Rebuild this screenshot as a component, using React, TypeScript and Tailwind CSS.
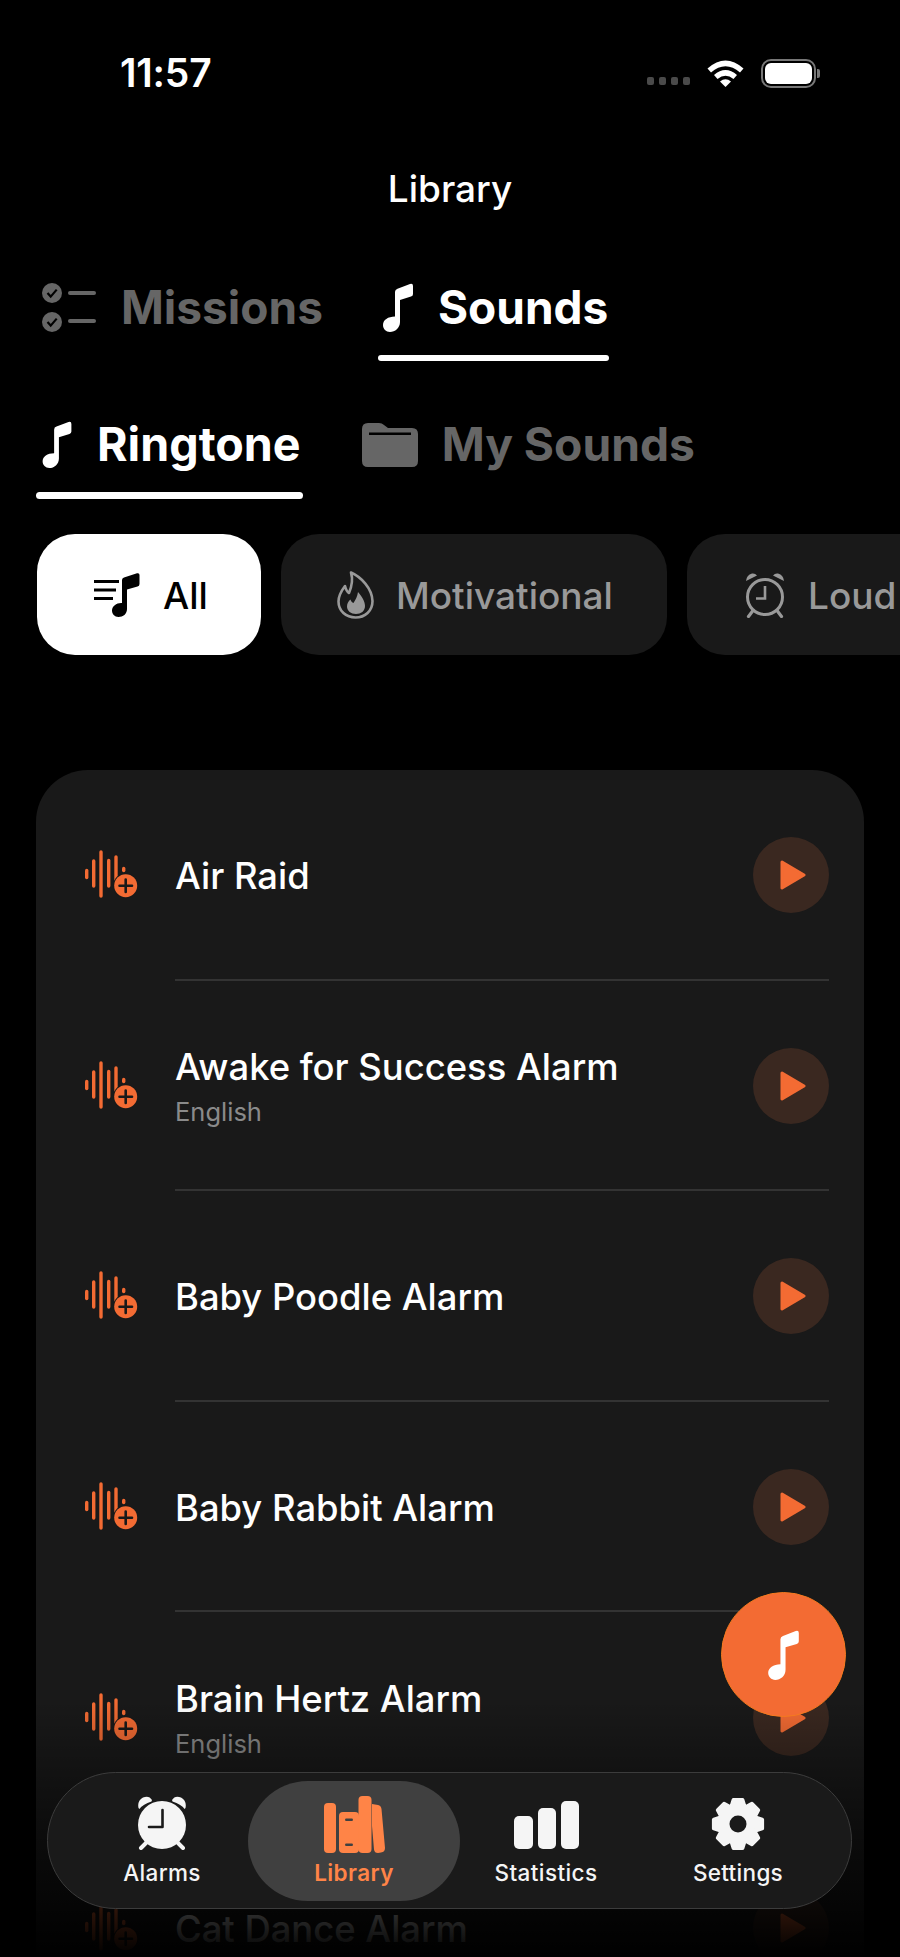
import React from "react";

const NOTE = "M12 9 Q12 6.5 14.5 5.8 L27 1 Q30 0 30 3 L30 11 Q30 13 28 13.6 L17 17 L17 39 C17 45 12 49 7 49 C3 49 0 46 0 42 C0 37 5 33.5 12 33.5 Z";

function Note({ className, color = "#fff" }: { className: string; color?: string }) {
  return (
    <svg viewBox="0 0 30 49" className={className}>
      <path d={NOTE} fill={color} />
    </svg>
  );
}

function MissionsIcon() {
  const Check = ({ cy }: { cy: number }) => (
    <g>
      <circle cx="10" cy={cy} r="10" fill="#666" />
      <path d={`M5.5 ${cy} l3.2 3.6 l6 -7`} stroke="#000" strokeWidth="2.2" fill="none" />
    </g>
  );
  return (
    <svg viewBox="0 0 54 49" className="w-[54px] h-[49px] shrink-0">
      <Check cy={10} />
      <Check cy={39} />
      <rect x="26" y="8" width="28" height="4" rx="2" fill="#666" />
      <rect x="26" y="36" width="28" height="4" rx="2" fill="#666" />
    </svg>
  );
}

function FolderIcon() {
  return (
    <svg viewBox="0 0 56 44" className="w-[56px] h-[44px] shrink-0">
      <path
        d="M0 6 Q0 0 6 0 H17 Q20 0 22 2 L26 5 H50 Q56 5 56 11 V38 Q56 44 50 44 H6 Q0 44 0 38 Z"
        fill="#666"
      />
      <rect x="7" y="9.5" width="42" height="2.5" fill="#000" />
    </svg>
  );
}

function AllIcon() {
  return (
    <svg viewBox="0 0 46 44" className="w-[46px] h-[44px] shrink-0">
      <rect x="0" y="7" width="25" height="3" fill="#000" />
      <rect x="0" y="15.5" width="22" height="3" fill="#000" />
      <rect x="0" y="24" width="19" height="3" fill="#000" />
      <path
        d="M28 7 Q28 5 30 4.5 L43 0.3 Q45.5 -0.3 45.5 2 V11 Q45.5 13 43.5 13.5 L33 16.5 V36 C33 41 29 44 24.5 44 C20.5 44 18 41 18 37.5 C18 33 23 29.5 28 30 Z"
        fill="#000"
      />
    </svg>
  );
}

function FlameIcon() {
  return (
    <svg viewBox="0 0 37 48" className="w-[37px] h-[48px] shrink-0">
      <path
        d="M14 1.5 C24 6 35 17 35.5 30 C35.5 40 28 46.5 18.5 46.5 C9 46.5 1.5 40 1.5 30.5 C1.5 24 5 19 8 15 C9 19 10 21 12 22 C15 15 16 8 14 1.5 Z"
        fill="none"
        stroke="#999"
        strokeWidth="2.6"
        strokeLinejoin="round"
      />
      <path
        d="M21 21 C25 26 28 30 28 35 C28 40 24 43 19 43 C14 43 10 40 10 35.5 C10 32.5 11.5 30 13.5 28.5 C14 30.5 15 31.5 16.5 32 C18.5 29 20.5 25 21 21 Z"
        fill="#999"
      />
    </svg>
  );
}

function LoudIcon() {
  return (
    <svg viewBox="0 0 42 46" className="w-[42px] h-[46px] shrink-0">
      <circle cx="21" cy="25" r="17.5" fill="none" stroke="#999" strokeWidth="3" />
      <path d="M21 14 V26.5 H12" fill="none" stroke="#999" strokeWidth="2.6" />
      <path d="M2 9 Q2.5 3 8 1.5 Q11 1 13 3.5 Z" fill="#999" />
      <path d="M40 9 Q39.5 3 34 1.5 Q31 1 29 3.5 Z" fill="#999" />
      <path d="M9 38.5 L4.5 44.5 M33 38.5 L37.5 44.5" stroke="#999" strokeWidth="3.2" strokeLinecap="round" />
    </svg>
  );
}

function WavePlus() {
  return (
    <svg viewBox="84 848 54 54" className="w-[54px] h-[54px] shrink-0">
      <g stroke="#f36b33" strokeWidth="3.4" strokeLinecap="round" fill="none">
        <path d="M86.7 870.5 V877.5" />
        <path d="M93.7 861 V886" />
        <path d="M101 852 V896" />
        <path d="M108.7 860.5 V886" />
        <path d="M116 857 V880" />
        <path d="M123.7 868.5 V870.5" />
      </g>
      <circle cx="125.7" cy="885.7" r="11.5" fill="#f36b33" stroke="#191919" strokeWidth="2" paintOrder="stroke" />
      <path d="M125.7 879.5 V892 M119.5 885.7 H132" stroke="#191919" strokeWidth="2.6" strokeLinecap="round" />
    </svg>
  );
}

function PlayButton() {
  return (
    <div className="w-[76px] h-[76px] rounded-full bg-[#3a2820] flex items-center justify-center shrink-0 pl-[3px]">
      <svg viewBox="0 0 26 30" className="w-[26px] h-[30px]">
        <path
          d="M2 2 L24 15 L2 28 Z"
          fill="#f36b33"
          stroke="#f36b33"
          strokeWidth="3"
          strokeLinejoin="round"
        />
      </svg>
    </div>
  );
}

function AlarmSolid() {
  return (
    <svg viewBox="0 0 50 54" className="w-[50px] h-[54px]">
      <circle cx="25" cy="29" r="24" fill="#f5f5f5" />
      <path d="M1.5 12 Q0 5 6 1.5 Q12 -1 15 4 L14.5 5.5 Q6 8 2.5 13 Z" fill="#f5f5f5" />
      <path d="M48.5 12 Q50 5 44 1.5 Q38 -1 35 4 L35.5 5.5 Q44 8 47.5 13 Z" fill="#f5f5f5" />
      <path d="M10 46 L4 52 M40 46 L46 52" stroke="#f5f5f5" strokeWidth="4" strokeLinecap="round" />
      <path d="M25.5 14 V31 H12" fill="none" stroke="#1a1a1a" strokeWidth="2.6" strokeLinecap="round" strokeLinejoin="round" />
    </svg>
  );
}

function Books() {
  const c = "#ff8447";
  return (
    <svg viewBox="0 0 61 57" className="w-[61px] h-[57px]">
      <rect x="0" y="7" width="12" height="50" rx="4" fill={c} />
      <rect x="15" y="16" width="20" height="41" rx="4" fill={c} />
      <rect x="34.5" y="0" width="13" height="57" rx="4" fill={c} />
      <path d="M48 8 L54 9 Q57 9.5 57.5 13 L61 52 Q61 56 57 56.5 L54 57 Q50.5 57 50 53.5 L48 30 Z" fill={c} />
      <rect x="21" y="22.5" width="8" height="2.4" rx="1.2" fill="#404040" />
      <rect x="21" y="47.5" width="8" height="2.4" rx="1.2" fill="#404040" />
    </svg>
  );
}

function Bars() {
  return (
    <svg viewBox="0 0 65 48" className="w-[65px] h-[48px]">
      <rect x="0" y="15" width="19" height="33" rx="5" fill="#f5f5f5" />
      <rect x="24" y="7" width="18" height="41" rx="5" fill="#f5f5f5" />
      <rect x="47" y="0" width="18" height="48" rx="5" fill="#f5f5f5" />
    </svg>
  );
}

function Gear() {
  const pts: string[] = [];
  for (let i = 0; i < 8; i++) {
    const a = (i * Math.PI) / 4 - Math.PI / 2;
    const seq: [number, number][] = [
      [18.5, -0.36],
      [24.5, -0.18],
      [24.5, 0.18],
      [18.5, 0.36],
    ];
    for (const [r, d] of seq) {
      pts.push(`${(27 + r * Math.cos(a + d)).toFixed(2)} ${(27 + r * Math.sin(a + d)).toFixed(2)}`);
    }
  }
  return (
    <svg viewBox="0 0 54 54" className="w-[54px] h-[54px]">
      <path
        d={`M${pts.join(" L")} Z`}
        fill="#f5f5f5"
        stroke="#f5f5f5"
        strokeWidth="4"
        strokeLinejoin="round"
      />
      <circle cx="27" cy="27" r="8.5" fill="#1a1a1a" />
    </svg>
  );
}

function Wifi() {
  return (
    <svg viewBox="0 0 37 28" className="w-[37px] h-[28px]">
      <path d="M0.5 9.5 Q18.5 -6.5 36.5 9.5 L33 13.5 Q18.5 1 4 13.5 Z" fill="#fff" />
      <path d="M7 16 Q18.5 6 30 16 L26.5 20 Q18.5 13.5 10.5 20 Z" fill="#fff" />
      <path d="M13 22.5 Q18.5 18 24 22.5 L18.5 28 Z" fill="#fff" />
    </svg>
  );
}

const rows = [
  { name: "Air Raid" },
  { name: "Awake for Success Alarm", sub: "English" },
  { name: "Baby Poodle Alarm" },
  { name: "Baby Rabbit Alarm" },
  { name: "Brain Hertz Alarm", sub: "English" },
  { name: "Cat Dance Alarm" },
];

export default function App() {
  return (
    <div className="relative w-[900px] h-[1957px] overflow-hidden bg-black font-['Inter',sans-serif] text-white">
      {/* status bar */}
      <div className="mt-[58px] h-[30px] flex items-center pl-[120px] pr-[80px]">
        <span className="text-[39px] leading-[30px] font-semibold tracking-[-0.2px]">11:57</span>
        <div className="ml-auto flex items-center">
          <div className="flex gap-[5px] mt-[15px]">
            <div className="w-[7px] h-[8px] rounded-[2px] bg-[#4a4a4a]" />
            <div className="w-[7px] h-[8px] rounded-[2px] bg-[#4a4a4a]" />
            <div className="w-[7px] h-[8px] rounded-[2px] bg-[#4a4a4a]" />
            <div className="w-[7px] h-[8px] rounded-[2px] bg-[#4a4a4a]" />
          </div>
          <div className="ml-[17px]">
            <Wifi />
          </div>
          <div className="ml-[17px] w-[55px] h-[29px] rounded-[10px] border-[2px] border-[#777] p-[2px]">
            <div className="w-full h-full rounded-[6px] bg-white" />
          </div>
          <div className="ml-[1px] w-[3px] h-[9px] rounded-r-[2px] bg-[#777]" />
        </div>
      </div>

      {/* title */}
      <div className="mt-[79px] h-[44px] flex items-center justify-center text-[37px] font-medium">Library</div>

      {/* main tabs */}
      <div className="mt-[72px] pl-[42px] flex gap-[55px] items-start">
        <div className="flex items-center gap-[25px] h-[49px] text-[#666] text-[46px] font-bold">
          <MissionsIcon />
          <span>Missions</span>
        </div>
        <div className="flex flex-col">
          <div className="flex items-center gap-[25px] h-[49px] pl-[5px] pr-[1px] text-[46px] font-bold">
            <Note className="w-[30px] h-[49px] shrink-0" />
            <span>Sounds</span>
          </div>
          <div className="mt-[23px] h-[6px] rounded-full bg-white" />
        </div>
      </div>

      {/* sub tabs */}
      <div className="mt-[60px] pl-[36px] flex items-start gap-[59px]">
        <div className="flex flex-col">
          <div className="flex items-center gap-[25px] h-[47px] pl-[6px] pr-[2px] text-[46.6px] font-bold">
            <Note className="w-[30px] h-[47px] shrink-0" />
            <span>Ringtone</span>
          </div>
          <div className="mt-[24px] h-[7px] rounded-full bg-white" />
        </div>
        <div className="flex items-center gap-[24px] h-[47px] text-[#666] text-[46.2px] font-bold">
          <FolderIcon />
          <span>My Sounds</span>
        </div>
      </div>

      {/* chips */}
      <div className="mt-[35px] pl-[37px] flex gap-[20px]">
        <div className="shrink-0 w-[224px] h-[121px] rounded-[38px] bg-white flex items-center pl-[57px] gap-[23px] text-black text-[37px] font-medium">
          <AllIcon />
          <span className="mt-[2px]">All</span>
        </div>
        <div className="shrink-0 w-[386px] h-[121px] rounded-[38px] bg-[#191919] flex items-center pl-[56px] gap-[22px] text-[#999] text-[37px] font-medium">
          <FlameIcon />
          <span className="mt-[2px]">Motivational</span>
        </div>
        <div className="shrink-0 w-[300px] h-[121px] rounded-[38px] bg-[#191919] flex items-center pl-[57px] gap-[22px] text-[#999] text-[37px] font-medium">
          <LoudIcon />
          <span className="mt-[2px]">Loud</span>
        </div>
      </div>

      {/* list */}
      <div className="mt-[115px] mx-[36px] rounded-[52px] bg-[#191919] pt-[2px] h-[1400px]">
        {rows.map((r, i) => (
          <div key={r.name} className="h-[210.6px]">
            <div className="h-[206.6px] flex items-center pl-[48px] pr-[35px]">
              <WavePlus />
              <div className="ml-[37px] flex-1 flex flex-col pt-[2px]">
                <div className="text-[36.4px] leading-[44px] font-medium">{r.name}</div>
                {r.sub && <div className="text-[25.5px] leading-[30px] mt-[8px] mb-[2px] text-[#8a8a8a]">{r.sub}</div>}
              </div>
              <PlayButton />
            </div>
            {i < rows.length - 1 && <div className="ml-[139px] mr-[35px] h-[2px] bg-[#333]" />}
          </div>
        ))}
      </div>

      {/* bottom fade */}
      <div className="absolute left-0 right-0 bottom-0 h-[257px] bg-gradient-to-b from-transparent to-black" />

      {/* FAB */}
      <div className="absolute left-[721px] top-[1592px] w-[125px] h-[125px] rounded-full bg-[#f36b33] border border-[#f57a1f] flex items-center justify-center">
        <Note className="w-[33px] h-[50px]" />
      </div>

      {/* nav */}
      <div className="absolute left-[47px] top-[1772px] w-[805px] h-[137px] rounded-full bg-[#1a1a1a] border-[1.5px] border-[#3c3c3c] flex items-center">
        <div className="absolute left-[200px] top-[8px] w-[212px] h-[120px] rounded-full bg-[#404040]" />
        <div className="relative flex w-full h-full">
          <div className="absolute left-[29px] w-[170px] flex flex-col items-center pt-[23px]">
            <AlarmSolid />
            <div className="mt-[9px] text-[22.5px] leading-[28px] font-medium tracking-[0.3px] text-[#f5f5f5]">Alarms</div>
          </div>
          <div className="absolute left-[200px] w-[212px] flex flex-col items-center pt-[23px]">
            <Books />
            <div className="mt-[6px] text-[22.5px] leading-[28px] font-semibold tracking-[0.4px] text-[#ff8447]">Library</div>
          </div>
          <div className="absolute left-[412px] w-[172px] flex flex-col items-center pt-[28px]">
            <Bars />
            <div className="mt-[10px] text-[22.5px] leading-[28px] font-medium tracking-[0.4px] text-[#f5f5f5]">Statistics</div>
          </div>
          <div className="absolute left-[595px] w-[190px] flex flex-col items-center pt-[24px]">
            <Gear />
            <div className="mt-[8px] text-[22.5px] leading-[28px] font-medium tracking-[0.3px] text-[#f5f5f5]">Settings</div>
          </div>
        </div>
      </div>
    </div>
  );
}
